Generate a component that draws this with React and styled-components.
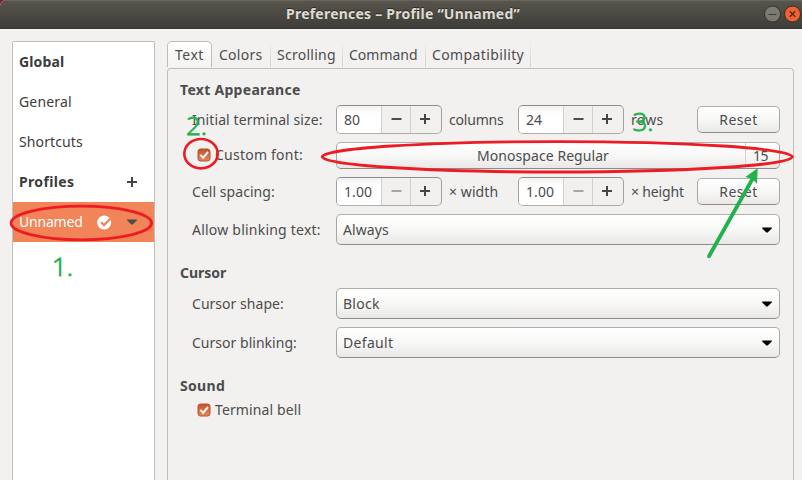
import React from "react";
import styled, { createGlobalStyle, css } from "styled-components";

const GlobalStyle = createGlobalStyle`
  * { box-sizing: border-box; }
  html, body { margin: 0; background: #8a1538; overflow: hidden; }
`;

const Window = styled.div`
  position: relative;
  width: 802px;
  height: 480px;
  display: flex;
  flex-direction: column;
  overflow: hidden;
  border-radius: 6px 0 0 0;
  background: #f2f1f0;
  color: #4c4c4c;
  font: 14px/20px "Noto Sans", "Open Sans", sans-serif;
`;

const TitleBar = styled.header`
  flex: none;
  height: 29px;
  display: grid;
  grid-template-columns: 286px 1fr auto;
  align-items: center;
  padding-right: 1px;
  background: linear-gradient(#5c5a50, #55534b 8%, #3e3d38 96%, #35342f);
  box-shadow: inset 0 1px #67655a;
`;

const Title = styled.h1`
  grid-column: 2;
  margin: 0;
  padding-bottom: 1px;
  color: #dfdbd2;
  font-size: 14px;
  line-height: 20px;
  font-weight: 700;
  letter-spacing: 0.23px;
  text-shadow: 0 -1px #2b2a26;
`;

const WindowButtons = styled.div`
  display: flex;
  gap: 3px;
  padding-bottom: 1px;
  svg { display: block; }
`;

const Body = styled.main`
  flex: 1;
  min-height: 0;
  display: flex;
  align-items: stretch;
  gap: 12px;
  padding: 12px 8px 0 12px;
`;

const Sidebar = styled.nav`
  width: 143px;
  border: 1px solid #c2bfbb;
  border-bottom: 0;
  border-radius: 2px 2px 0 0;
  background: #fff;
`;

const SidebarRow = styled.div`
  height: 40px;
  display: grid;
  grid-template-columns: 78px 30px 1fr;
  align-items: center;
  padding-left: 6px;
  color: #3c3c3c;
  ${(p) => p.$heading && css`font-weight: 700;`}
  ${(p) => p.$selected && css`background: #f18458; color: #fff;`}
  svg { display: block; }
  svg:last-child { grid-column: 3; }
`;

const Text = styled.span`
  white-space: nowrap;
  letter-spacing: ${(p) => p.$ls || 0}px;
`;

const Notebook = styled.section`
  flex: 1;
  display: flex;
  flex-direction: column;
`;

const Tabs = styled.div`
  display: flex;
  height: 27px;
`;

const Tab = styled.div`
  width: ${(p) => p.$width}px;
  height: 26px;
  padding: 4px 0 0 ${(p) => p.$pad || 7}px;
  border: 0 solid;
  border-right-width: 1px;
  border-image: linear-gradient(#f2f1f0, #d0cecb) 1;
  ${(p) => p.$active && css`
    border: 1px solid #bfbcb8;
    border-image: none;
    border-bottom: 0;
    border-radius: 5px 5px 0 0;
    padding-top: 3px;
    background: linear-gradient(#fff, #f4f3f2);
  `}
`;

const Panel = styled.div`
  flex: 1;
  border: 1px solid #c2bfbb;
  border-bottom: 0;
  border-radius: 4px 4px 0 0;
  padding: 11px 13px 0 12px;
`;

const Group = styled.section`
  margin-bottom: 18px;
`;

const GroupTitle = styled.h2`
  margin: 0;
  font-size: 14px;
  line-height: 20px;
  font-weight: 700;
`;

const Fields = styled.div`
  display: flex;
  flex-direction: column;
  gap: 8px;
  padding: ${(p) => p.$top ?? 5}px 0 0 12px;
`;

const Field = styled.div`
  display: grid;
  grid-template-columns: 144px 1fr;
  align-items: center;
  height: ${(p) => p.$height}px;
`;

const SizeControls = styled.div`
  display: grid;
  grid-template-columns: 106px 76px 106px 73px 83px;
  align-items: center;
`;

const Unit = styled(Text)`
  padding-left: 7px;
`;

const Spin = styled.div`
  height: 29px;
  display: grid;
  grid-template-columns: 44px 29px 1fr;
  border: 1px solid;
  border-color: #8f8d8a #a3a19e #b0aeab;
  border-radius: 5px;
  overflow: hidden;
  background: #f1f0ef;
`;

const SpinValue = styled.div`
  padding: 4px 0 0 7px;
  background: linear-gradient(#f2f2f2, #fff 30%);
`;

const SpinStep = styled.div`
  display: flex;
  align-items: center;
  padding-left: 9px;
  border-left: 1px solid #d3d1ce;
`;

const raised = css`
  border: 1px solid;
  border-color: #b1afac #a9a7a4 #8e8c89;
  border-radius: 5px;
  background: linear-gradient(#fff, #f8f8f7 50%, #e9e8e6);
`;

const ResetButton = styled.div`
  ${raised}
  height: 27px;
  padding-top: 3px;
  text-align: center;
`;

const Combo = styled.div`
  ${raised}
  height: 31px;
  display: flex;
  align-items: center;
  justify-content: space-between;
  padding: 0 7px 0 6px;
`;

const FontButton = styled.div`
  ${raised}
  height: 27px;
  display: grid;
  grid-template-columns: 1fr 34px;
  text-align: center;
`;

const FontName = styled.div`
  padding: 3px 0 0 4px;
`;

const FontSize = styled.div`
  border-left: 1px solid #d6d4d1;
  height: 25px;
  padding: 3px 4px 0 0;
`;

const CheckLabel = styled.div`
  display: flex;
  align-items: center;
  gap: 4px;
  height: 20px;
  padding-left: 5px;
  margin-bottom: ${(p) => p.$raise || 0}px;
`;

const Annotations = styled.svg`
  position: absolute;
  inset: 0;
  text {
    font: 300 26px "Open Sans", sans-serif;
    fill: #22b14c;
    stroke: #22b14c;
    stroke-width: 0.9px;
  }
`;

const Minus = ({ disabled }) => (
  <svg width="11" height="11" viewBox="0 0 11 11">
    <path d="M.5 5h10" stroke={disabled ? "#a9a5a1" : "#4c4c4c"} strokeWidth="2" />
  </svg>
);

const Plus = () => (
  <svg width="11" height="11" viewBox="0 0 11 11">
    <path d="M0 5h10M5 0v10" stroke="#454545" strokeWidth="2" />
  </svg>
);

const Arrow = ({ color = "#000" }) => (
  <svg width="10" height="6" viewBox="0 0 10 6">
    <path d="M.2.5h9.6v.9L5.6 5.5H4.4L.2 1.4z" fill={color} />
  </svg>
);

const DefaultBadge = () => (
  <svg width="15" height="15" viewBox="0 0 15 15">
    <circle cx="7.2" cy="7.5" r="7" fill="#fff" />
    <path d="M4.1 7.3l2.8 2.8 7.4-7.3" fill="none" stroke="#f18458" strokeWidth="2.2" />
  </svg>
);

const CheckBox = () => (
  <svg width="14" height="14" viewBox="0 0 14 14">
    <defs>
      <linearGradient id="check" x2="0" y2="1">
        <stop stopColor="#c94f20" />
        <stop offset="1" stopColor="#e78762" />
      </linearGradient>
    </defs>
    <rect x="1" y="1" width="12" height="12" rx="2.5" fill="url(#check)" stroke="#ae5535" />
    <path d="M3.4 6.8l2.7 3L11 4" fill="none" stroke="#fff" strokeWidth="2" />
  </svg>
);

const Minimize = () => (
  <svg width="17" height="18" viewBox="0 0 17 18">
    <circle cx="8.5" cy="9" r="8" fill="#7c7a73" stroke="#33322d" />
    <path d="M4.5 9.5h8" stroke="#3a3934" />
  </svg>
);

const Close = () => (
  <svg width="17" height="18" viewBox="0 0 17 18">
    <circle cx="8.5" cy="9" r="8" fill="#ee6234" stroke="#3b2c24" />
    <path d="M5.8 6.3l5.4 5.4m0-5.4l-5.4 5.4" stroke="#5b2612" strokeWidth="1.3" />
  </svg>
);

function SpinButton({ value, ls, atMinimum }) {
  return (
    <Spin>
      <SpinValue><Text $ls={ls}>{value}</Text></SpinValue>
      <SpinStep><Minus disabled={atMinimum} /></SpinStep>
      <SpinStep><Plus /></SpinStep>
    </Spin>
  );
}

function Choice({ label, labelLs, value, ls }) {
  return (
    <Field $height={31}>
      <Text $ls={labelLs}>{label}</Text>
      <Combo><Text $ls={ls}>{value}</Text><Arrow /></Combo>
    </Field>
  );
}

export default function App() {
  return (
    <>
      <GlobalStyle />
      <Window>
        <TitleBar>
          <Title>Preferences – Profile “Unnamed”</Title>
          <WindowButtons><Minimize /><Close /></WindowButtons>
        </TitleBar>
        <Body>
          <Sidebar>
            <SidebarRow $heading><Text $ls={0.14}>Global</Text></SidebarRow>
            <SidebarRow><Text $ls={0.17}>General</Text></SidebarRow>
            <SidebarRow><Text $ls={0.12}>Shortcuts</Text></SidebarRow>
            <SidebarRow $heading><Text $ls={0.35}>Profiles</Text><Plus /></SidebarRow>
            <SidebarRow $selected>
              <Text $ls={-0.2}>Unnamed</Text><DefaultBadge /><Arrow color="#4c4c4c" />
            </SidebarRow>
          </Sidebar>
          <Notebook>
            <Tabs>
              <Tab $active $width={45}><Text $ls={0.5}>Text</Text></Tab>
              <Tab $width={59}><Text $ls={0.26}>Colors</Text></Tab>
              <Tab $width={72} $pad={6}><Text $ls={0.27}>Scrolling</Text></Tab>
              <Tab $width={83} $pad={6}><Text>Command</Text></Tab>
              <Tab $width={105} $pad={6}><Text $ls={0.38}>Compatibility</Text></Tab>
            </Tabs>
            <Panel>
              <Group>
                <GroupTitle><Text $ls={0.3}>Text Appearance</Text></GroupTitle>
                <Fields>
                  <Field $height={29}>
                    <Text $ls={0.09}>Initial terminal size:</Text>
                    <SizeControls>
                      <SpinButton value="80" />
                      <Unit $ls={-0.2}>columns</Unit>
                      <SpinButton value="24" />
                      <Unit $ls={0.27}>rows</Unit>
                      <ResetButton><Text $ls={0.4}>Reset</Text></ResetButton>
                    </SizeControls>
                  </Field>
                  <Field $height={27}>
                    <CheckLabel $raise={2}><CheckBox /><Text $ls={0.23}>Custom font:</Text></CheckLabel>
                    <FontButton>
                      <FontName><Text $ls={0.06}>Monospace Regular</Text></FontName>
                      <FontSize><Text $ls={-0.5}>15</Text></FontSize>
                    </FontButton>
                  </Field>
                  <Field $height={29}>
                    <Text $ls={0.05}>Cell spacing:</Text>
                    <SizeControls>
                      <SpinButton value="1.00" ls={0.08} atMinimum />
                      <Unit $ls={0.08}>× width</Unit>
                      <SpinButton value="1.00" ls={0.08} atMinimum />
                      <Unit $ls={-0.16}>× height</Unit>
                      <ResetButton><Text $ls={0.4}>Reset</Text></ResetButton>
                    </SizeControls>
                  </Field>
                  <Choice label="Allow blinking text:" labelLs={0.22} value="Always" ls={0.09} />
                </Fields>
              </Group>
              <Group>
                <GroupTitle><Text $ls={0}>Cursor</Text></GroupTitle>
                <Fields>
                  <Choice label="Cursor shape:" labelLs={0.03} value="Block" ls={0.27} />
                  <Choice label="Cursor blinking:" labelLs={0.02} value="Default" ls={0.33} />
                </Fields>
              </Group>
              <Group>
                <GroupTitle><Text $ls={0.33}>Sound</Text></GroupTitle>
                <Fields $top={4}>
                  <CheckLabel><CheckBox /><Text $ls={0.12}>Terminal bell</Text></CheckLabel>
                </Fields>
              </Group>
            </Panel>
          </Notebook>
        </Body>
        <Annotations width="802" height="480" viewBox="0 0 802 480">
          <g fill="none" stroke="#ed1c24">
            <ellipse cx="81.3" cy="223" rx="70.2" ry="16.9" strokeWidth="2.9" />
            <ellipse cx="201" cy="153.7" rx="16.7" ry="14.7" strokeWidth="2.6" />
            <ellipse cx="557.3" cy="156.8" rx="235" ry="15.2" strokeWidth="2.9" />
          </g>
          <path d="M709 256.3L753 178" stroke="#22b14c" strokeWidth="3.8" strokeLinecap="round" />
          <path d="M757.7 168.3L745.3 177l7 2 4.7 4.7z" fill="#22b14c" />
          <text x="52" y="276">1.</text>
          <text x="186" y="135">2.</text>
          <text x="632.5" y="131">3.</text>
        </Annotations>
      </Window>
    </>
  );
}
